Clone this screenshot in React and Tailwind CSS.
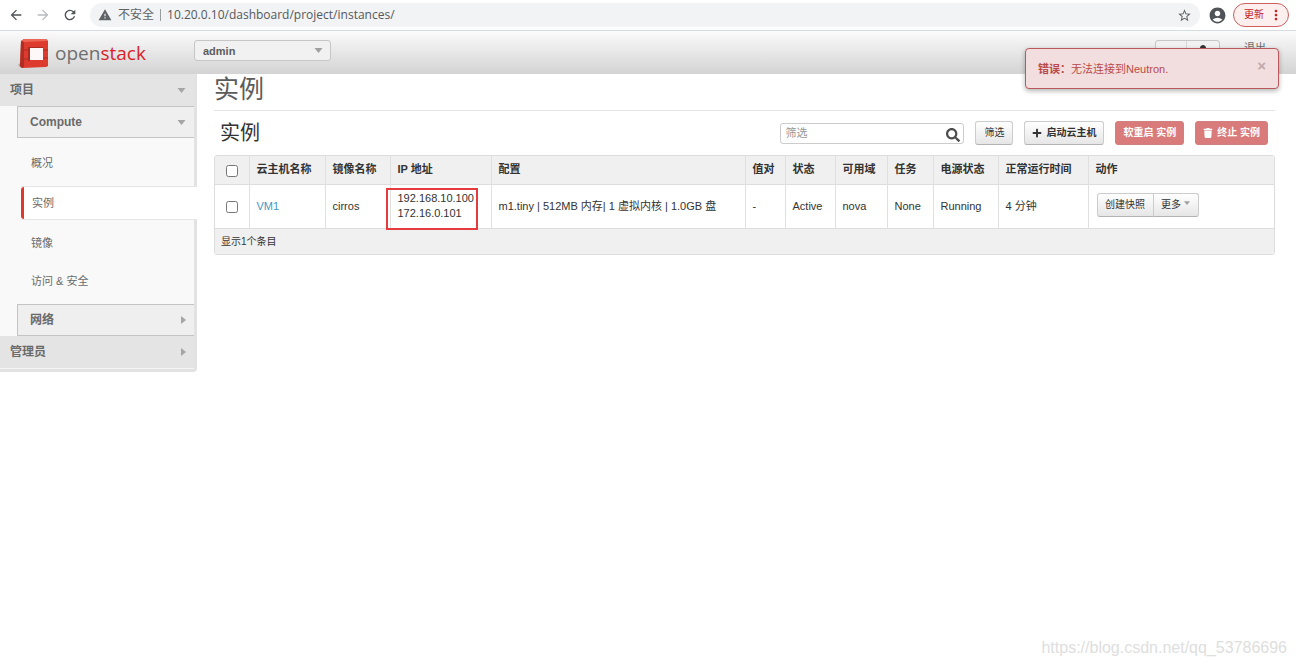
import { useState } from "react"
import { FaPlus, FaTrash, FaSearch, FaUser } from "react-icons/fa"
import { MdArrowBack, MdArrowForward, MdRefresh, MdWarning, MdStarBorder, MdAccountCircle, MdMoreVert } from "react-icons/md"

const columns = [
  { label: "云主机名称", width: "w-[76px]" },
  { label: "镜像名称", width: "w-[65px]" },
  { label: "IP 地址", width: "w-[101px]" },
  { label: "配置", width: "" },
  { label: "值对", width: "w-[40px]" },
  { label: "状态", width: "w-[50px]" },
  { label: "可用域", width: "w-[52px]" },
  { label: "任务", width: "w-[46px]" },
  { label: "电源状态", width: "w-[65px]" },
  { label: "正常运行时间", width: "w-[90px]" },
  { label: "动作", width: "w-[186px]" },
]

const instances = [
  {
    id: "vm1",
    name: "VM1",
    image: "cirros",
    ips: ["192.168.10.100", "172.16.0.101"],
    size: "m1.tiny | 512MB 内存| 1 虚拟内核 | 1.0GB 盘",
    keypair: "-",
    status: "Active",
    zone: "nova",
    task: "None",
    power: "Running",
    uptime: "4 分钟",
  },
]

const cell = "border-l border-[#e0e0e0] pl-[7px]"
const greyButton =
  "rounded-[3px] border border-[#cccccc] border-b-[#b3b3b3] bg-linear-to-b from-white to-[#e6e6e6] text-[10px] leading-4 text-[#333333]"
const dangerButton =
  "flex h-6 items-center gap-1 rounded-[3px] border border-[#d08080] bg-[#d97b7a] px-[7px] text-[10px] leading-4 font-bold text-white"

function Caret({ className }) {
  return (
    <svg viewBox="0 0 8 5" className={className} aria-hidden="true">
      <path d="M0 0h8L4 5z" fill="currentColor" />
    </svg>
  )
}

function CaretRight() {
  return (
    <svg viewBox="0 0 5 8" className="h-2 w-[5px] text-[#a5a5a5]" aria-hidden="true">
      <path d="M0 0v8l5-4z" fill="currentColor" />
    </svg>
  )
}

function BrowserBar() {
  return (
    <div className="flex h-[31px] items-center border-b border-[#d5dde0] bg-white pr-[7px] pl-2 text-[#5f6368]">
      <button aria-label="Back"><MdArrowBack className="size-4 text-[#505357]" /></button>
      <button aria-label="Forward" className="ml-[11px]"><MdArrowForward className="size-4 text-[#b8babd]" /></button>
      <button aria-label="Reload" className="ml-[11px]"><MdRefresh className="size-4 text-[#505357]" /></button>
      <div className="ml-3 flex h-6 flex-1 items-center rounded-full bg-[#f1f3f4] px-2">
        <MdWarning className="size-[14px]" />
        <span className="ml-[6px] text-[12px] leading-4">不安全</span>
        <span className="mx-[6px] h-3 w-px bg-[#9a9da0]" />
        <input
          aria-label="URL"
          className="min-w-0 flex-1 bg-transparent font-['Open_Sans','Noto_Sans',sans-serif] text-[12px] leading-4 text-[#55585c] outline-none"
          defaultValue="10.20.0.10/dashboard/project/instances/"
        />
        <button aria-label="Bookmark"><MdStarBorder className="size-[15px]" /></button>
      </div>
      <MdAccountCircle className="ml-2 size-[19px] text-[#505357]" />
      <button className="ml-[6px] flex h-6 w-14 items-center rounded-full border border-[#cc5f5f] bg-[#fcefee] pl-[10px] text-[10px] leading-4 text-[#c5221f]">
        更新
        <MdMoreVert className="ml-1 size-4" />
      </button>
    </div>
  )
}

function Logo() {
  return (
    <a href="#home" className="flex w-[194px] shrink-0 items-center pl-[18px]">
      <svg viewBox="0 0 30 30" className="size-[30px]" aria-hidden="true">
        <path d="M0 27 3 24v6z" fill="#a9a9a9" />
        <path d="M3 3 6 1h22l2 2v25l-2 1-24 1-2-2z" fill="#dc3b2e" />
        <path d="M3 3 6 1h22l2 2-24 1z" fill="#ee6655" />
        <path d="M3 3 6 4v25l-2 1-2-2z" fill="#b02e23" />
        <path d="M10 9h15v2H12v12h-2z" fill="#ad2c21" />
        <path d="M12 10h13v12H12z" fill="#fdf8f7" />
        <path d="M3 12h7M3 21h7M25 12h5M25 20h5" stroke="#b02e23" strokeWidth="1" />
      </svg>
      <span className="ml-[7px] font-['Open_Sans','Noto_Sans',sans-serif] text-[19px] leading-7 text-[#6f6f6f]">
        open<span className="font-medium text-[#da2228]">stack</span>
      </span>
    </a>
  )
}

function TopBar() {
  return (
    <header className="flex h-[43px] items-start bg-linear-to-b from-[#fbfbfb] to-[#d3d3d3]">
      <div className="flex h-full items-center">
        <Logo />
      </div>
      <div className="relative mt-[9px]">
        <select
          aria-label="Project"
          className="block h-[21px] w-[137px] appearance-none rounded-[3px] border border-[#c6c6c6] bg-[#f1f1f1] pl-2 text-[11px] leading-4 font-bold text-[#5c5c5c]"
        >
          <option>admin</option>
        </select>
        <Caret className="pointer-events-none absolute top-2 right-2 h-[5px] w-[9px] text-[#a0a0a0]" />
      </div>
      <div className="mt-[9px] ml-auto flex pr-[30px]">
        <button className="flex h-[21px] w-[65px] items-center rounded-[3px] border border-[#c6c6c6] bg-[#f1f1f1] text-[8px] leading-4 text-[#333333]">
          <span className="w-[30px] text-center">admin</span>
          <span className="flex h-full flex-1 items-center justify-center border-l border-[#d6d6d6]">
            <FaUser className="size-3" />
          </span>
        </button>
        <a href="#logout" className="ml-6 text-[11px] leading-4 text-[#6c6c6c]">退出</a>
      </div>
    </header>
  )
}

function ErrorAlert({ onClose }) {
  return (
    <div
      role="alert"
      className="absolute top-12 right-[17px] flex h-[41px] w-[254px] items-center rounded-[4px] border border-[#b9595c] bg-[#f2dede] px-3 text-[11px] leading-4 text-[#b94a48] shadow-[0_2px_5px_rgba(0,0,0,0.3)]"
    >
      <strong>错误：</strong>
      无法连接到Neutron.
      <button aria-label="Close" onClick={onClose} className="ml-auto self-start pt-2 text-[15px] leading-[18px] font-bold text-[#bda9a9]">
        ×
      </button>
    </div>
  )
}

function Sidebar() {
  return (
    <nav className="w-[197px] shrink-0 self-start rounded-br-[4px] border-r-[3px] border-b-[3px] border-[#e2e2e2] bg-[#f9f9f9] text-[11px] leading-4 text-[#6a6a6a]">
      <button className="flex h-8 w-full items-center justify-between bg-[#e4e4e4] pr-2 pl-[10px] text-[12px] font-bold">
        项目
        <Caret className="h-[5px] w-[9px] text-[#a5a5a5]" />
      </button>
      <div className="pl-[17px]">
        <button className="flex h-8 w-full items-center justify-between border border-r-0 border-[#c4c4c4] bg-[#efefef] pr-2 pl-3 text-[12px] font-bold">
          Compute
          <Caret className="h-[5px] w-[9px] text-[#a5a5a5]" />
        </button>
        <ul className="pt-[5px] pb-1">
          <li><a href="#overview" className="flex h-[39px] items-center pl-[14px]">概况</a></li>
          <li className="mt-1 -mr-[3px] mb-1">
            <a href="#instances" className="ml-1 flex h-[34px] items-center border-y border-[#e6e6e6] bg-white">
              <span className="h-full w-[3px] rounded-l-[3px] bg-[#dc3a2d]" />
              <span className="pl-2">实例</span>
            </a>
          </li>
          <li><a href="#images" className="flex h-[38px] items-center pl-[14px]">镜像</a></li>
          <li><a href="#access" className="flex h-[38px] items-center pl-[14px]">访问 &amp; 安全</a></li>
        </ul>
        <button className="flex h-8 w-full items-center justify-between border border-r-0 border-[#c4c4c4] bg-[#efefef] pr-2 pl-3 text-[12px] font-bold">
          网络
          <CaretRight />
        </button>
      </div>
      <button className="flex h-[33px] w-full items-center justify-between border-b border-[#f4f4f4] bg-[#e4e4e4] pr-2 pl-[10px] text-[12px] font-bold">
        管理员
        <CaretRight />
      </button>
    </nav>
  )
}

function InstanceTable({ selected, onToggle, onToggleAll }) {
  return (
    <div className="overflow-hidden rounded-[3px] border border-[#dddddd]">
      <table className="w-full table-fixed text-left text-[11px] leading-[15px] text-[#333333]">
        <thead className="bg-[#f0f0f0]">
          <tr className="h-7">
            <th className="w-[34px]">
              <input
                type="checkbox"
                aria-label="全选"
                className="mx-auto mt-[2px] block size-3"
                checked={selected.length === instances.length}
                onChange={onToggleAll}
              />
            </th>
            {columns.map((column) => (
              <th key={column.label} className={`${cell} ${column.width} whitespace-nowrap`}>
                {column.label}
              </th>
            ))}
          </tr>
        </thead>
        <tbody>
          {instances.map((instance) => (
            <tr key={instance.id} className="h-11 border-t border-[#dddddd]">
              <td>
                <input
                  type="checkbox"
                  aria-label={instance.name}
                  className="mx-auto mt-[2px] block size-3"
                  checked={selected.includes(instance.id)}
                  onChange={() => onToggle(instance.id)}
                />
              </td>
              <td className={cell}><a href="#vm1" className="text-[#4298c5]">{instance.name}</a></td>
              <td className={cell}>{instance.image}</td>
              <td className={`relative ${cell}`}>
                <ul>
                  {instance.ips.map((ip) => <li key={ip}>{ip}</li>)}
                </ul>
                <span className="absolute top-[3px] -left-[5px] h-[42px] w-[92px] border-2 border-[#e53a3e]" />
              </td>
              <td className={cell}>{instance.size}</td>
              <td className={cell}>{instance.keypair}</td>
              <td className={cell}>{instance.status}</td>
              <td className={cell}>{instance.zone}</td>
              <td className={cell}>{instance.task}</td>
              <td className={cell}>{instance.power}</td>
              <td className={cell}>{instance.uptime}</td>
              <td className="border-l border-[#e0e0e0] pl-2">
                <div className="flex pb-[2px]">
                  <button className={`${greyButton} h-6 w-[57px] rounded-r-none`}>创建快照</button>
                  <button className={`${greyButton} -ml-px flex h-6 w-[46px] items-center justify-center gap-[3px] rounded-l-none`}>
                    更多
                    <Caret className="mb-1 h-1 w-[6px] text-[#a0a0a0]" />
                  </button>
                </div>
              </td>
            </tr>
          ))}
        </tbody>
        <tfoot className="bg-[#f0f0f0]">
          <tr className="h-[26px] border-t border-[#dddddd]">
            <td colSpan={12} className="pl-[6px] text-[10px]">显示{instances.length}个条目</td>
          </tr>
        </tfoot>
      </table>
    </div>
  )
}

export default function App() {
  const [filter, setFilter] = useState("")
  const [selected, setSelected] = useState([])
  const [showError, setShowError] = useState(true)

  const toggle = (id) => {
    setSelected(selected.includes(id) ? selected.filter((item) => item !== id) : [...selected, id])
  }

  const toggleAll = () => {
    setSelected(selected.length === instances.length ? [] : instances.map((item) => item.id))
  }

  return (
    <div className="relative min-h-screen bg-white font-['Liberation_Sans','Noto_Sans_CJK_SC',sans-serif]">
      <BrowserBar />
      <TopBar />
      {showError && <ErrorAlert onClose={() => setShowError(false)} />}

      <div className="flex">
        <Sidebar />
        <main className="min-w-0 flex-1 pr-[21px] pl-[17px]">
          <h1 className="border-b border-[#e4e4e4] pb-[6px] text-[25px] leading-[30px] text-[#5c5c5c]">实例</h1>

          {/* Table toolbar */}
          <div className="flex h-11 items-center pr-[7px] pl-[6px]">
            <h2 className="mr-auto text-[20px] leading-6 text-[#333333]">实例</h2>
            <div className="relative">
              <input
                type="text"
                aria-label="筛选"
                placeholder="筛选"
                className="block h-[21px] w-[184px] rounded-[3px] border border-[#cccccc] px-1 text-[11px] leading-4 placeholder:text-[#999999]"
                value={filter}
                onChange={(e) => setFilter(e.target.value)}
              />
              <FaSearch className="pointer-events-none absolute top-[5px] right-1 size-[14px] text-[#4d4d4d]" />
            </div>
            <button className={`${greyButton} ml-[11px] h-6 w-[38px]`}>筛选</button>
            <button className={`${greyButton} ml-[11px] flex h-6 w-20 items-center justify-center gap-1 font-bold`}>
              <FaPlus className="size-[10px]" />
              启动云主机
            </button>
            <button className={`${dangerButton} ml-[11px]`}>软重启 实例</button>
            <button className={`${dangerButton} ml-[11px]`}>
              <FaTrash className="size-[10px]" />
              终止 实例
            </button>
          </div>

          <InstanceTable selected={selected} onToggle={toggle} onToggleAll={toggleAll} />
        </main>
      </div>

      <p className="absolute right-[9px] bottom-2 text-[16px] leading-5 text-[#dedede]">
        https://blog.csdn.net/qq_53786696
      </p>
    </div>
  )
}
